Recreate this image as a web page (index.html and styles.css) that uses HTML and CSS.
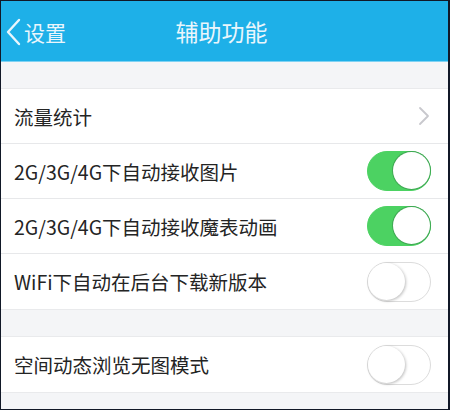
FILE: index.html
```html
<!DOCTYPE html>
<html lang="zh-CN">
<head>
  <meta charset="UTF-8">
  <title>辅助功能</title>
  <link rel="stylesheet" href="styles.css">
</head>
<body>
  <div class="screen">
    <div class="nav">
      <div class="back">
        <svg class="back-icon" width="16" height="28" viewBox="0 0 16 28"><path d="M14 2 L3 14 L14 26" fill="none" stroke="#e9f6fd" stroke-width="2.4" stroke-linecap="round" stroke-linejoin="round"/></svg>
        <span>设置</span>
      </div>
      <div class="title">辅助功能</div>
    </div>
    <div class="gap"></div>
    <div class="group">
      <div class="row">
        <span class="label">流量统计</span>
        <svg class="arrow" width="12" height="20" viewBox="0 0 12 20"><path d="M2 2 L10 10 L2 18" fill="none" stroke="#c8c8cd" stroke-width="1.8" stroke-linecap="round" stroke-linejoin="round"/></svg>
      </div>
      <div class="row">
        <span class="label">2G/3G/4G下自动接收图片</span>
        <span class="switch on"><span class="knob"></span></span>
      </div>
      <div class="row">
        <span class="label">2G/3G/4G下自动接收魔表动画</span>
        <span class="switch on"><span class="knob"></span></span>
      </div>
      <div class="row">
        <span class="label">WiFi下自动在后台下载新版本</span>
        <span class="switch"><span class="knob"></span></span>
      </div>
    </div>
    <div class="gap"></div>
    <div class="group">
      <div class="row">
        <span class="label">空间动态浏览无图模式</span>
        <span class="switch"><span class="knob"></span></span>
      </div>
    </div>
  </div>
</body>
</html>
```
FILE: styles.css
```css
* { margin: 0; padding: 0; box-sizing: border-box; }
body {
  font-family: "Noto Sans CJK SC", "Noto Sans", sans-serif;
  background: #f4f5f7;
}
.screen {
  width: 450px;
  height: 410px;
  overflow: hidden;
  border: 1px solid #111827;
  border-right-width: 2px;
  background: #f4f5f7;
}
.nav {
  height: 61px;
  background: #1eb0e8;
  border-bottom: 1px solid #7fd2f3;
  display: flex;
  align-items: center;
  justify-content: center;
  position: relative;
  color: #eaf6fc;
}
.back {
  position: absolute;
  left: 4px;
  top: 16px;
  display: flex;
  align-items: center;
  gap: 3px;
  font-size: 21px;
}
.title {
  font-size: 23px;
  margin-left: -6px;
}
.gap {
  height: 26px;
}
.group {
  background: #fff;
  border-top: 1px solid #e9eaec;
  border-bottom: 1px solid #e9eaec;
}
.row {
  height: 55px;
  display: flex;
  align-items: center;
  justify-content: space-between;
  padding: 0 17px 0 13px;
  border-bottom: 1px solid #e7e8ea;
}
.row:last-child {
  border-bottom: none;
}
.label {
  font-size: 19.5px;
  color: #242424;
}
.arrow {
  margin-right: 1px;
}
.switch {
  width: 64px;
  height: 40px;
  border-radius: 20px;
  border: 1.5px solid #dcdcdc;
  background: #fff;
  position: relative;
}
.switch .knob {
  position: absolute;
  top: 0;
  left: 0;
  width: 37px;
  height: 37px;
  border-radius: 50%;
  background: #fff;
  box-shadow: 1px 1px 3px rgba(0, 0, 0, 0.25);
}
.switch.on {
  background: #4cd262;
  border-color: #4cd262;
}
.switch.on .knob {
  left: auto;
  right: 0;
  box-shadow: 0 0 0 1px #3fa853;
}
```
